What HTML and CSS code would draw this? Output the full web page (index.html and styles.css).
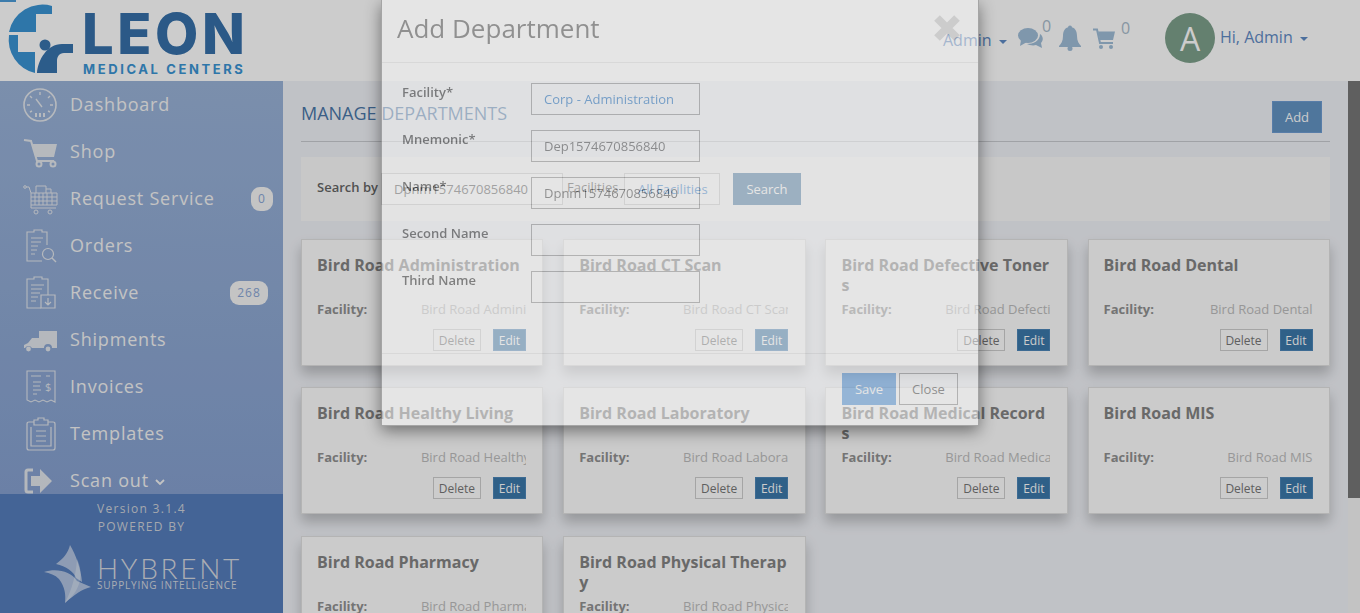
FILE: index.html
```html
<!DOCTYPE html>
<html lang="en">
<head>
  <meta charset="UTF-8" />
  <meta name="viewport" content="width=device-width, initial-scale=1.0"/>
  <title>Manage Departments</title>
  <link rel="stylesheet" href="styles.css">
</head>
<body>
  <div class="app">
    <header class="topbar">
      <span class="skip-mark"></span>
      <div class="logo">
        <svg class="logo-mark" viewBox="0 0 76 76" width="76" height="76">
          <path fill="#3a94d4" d="M52 6 V14 H36 V32 H9 A34 34 0 0 1 52 6 Z"/>
          <path fill="#3a94d4" d="M9 35 H18 V52 H35 V73 A34 34 0 0 1 9 35 Z"/>
          <circle cx="45" cy="45" r="5.5" fill="#3873ad"/>
          <path fill="#3873ad" d="M37 73 C38 60 47 44 62 44 H73 V53 H64 C59 53 57 57 57 61 V73 Z"/>
        </svg>
        <div class="logo-text">
          <span class="logo-name">LEON</span>
          <span class="logo-sub">MEDICAL CENTERS</span>
        </div>
      </div>
      <div class="top-actions">
        <span class="top-admin">Admin <i class="caret"></i></span>
        <svg class="top-icon comments" viewBox="0 0 26 22" width="26" height="22">
          <ellipse cx="10" cy="8.5" rx="10" ry="7.5" fill="#9fbdd8"/>
          <path d="M3 13 L2 19 L9 15 Z" fill="#9fbdd8"/>
          <path d="M22 7 C25 9 26 13 23 16 L24 21 L18 18 C15 19 11 18 9 17 C15 17 22 14 22 7 Z" fill="#9fbdd8"/>
        </svg>
        <sup class="count count-chat">0</sup>
        <svg class="top-icon bell" viewBox="0 0 24 26" width="24" height="26">
          <circle cx="12" cy="2.5" r="2" fill="#9fbdd8"/>
          <path d="M12 2 C17 2 19 6 19 11 C19 16 21 19 23 21 V22 H1 V21 C3 19 5 16 5 11 C5 6 7 2 12 2 Z" fill="#9fbdd8"/>
          <circle cx="12" cy="23.5" r="2.5" fill="#9fbdd8"/>
        </svg>
        <svg class="top-icon cart" viewBox="0 0 24 22" width="24" height="22">
          <path d="M1 1.5 H5 L8 15 H21" fill="none" stroke="#9fbdd8" stroke-width="2"/>
          <path d="M6 3.5 H23 L21 12 H8 Z" fill="#9fbdd8"/>
          <circle cx="9" cy="19" r="2" fill="#9fbdd8"/>
          <circle cx="19" cy="19" r="2" fill="#9fbdd8"/>
        </svg>
        <sup class="count count-cart">0</sup>
        <span class="avatar">A</span>
        <span class="top-user">Hi, Admin <i class="caret"></i></span>
      </div>
    </header>

    <div class="main">
      <aside class="sidebar">
        <nav class="menu">
          <a class="menu-item">
            <svg class="menu-icon" viewBox="0 0 36 36">
              <circle cx="18" cy="18" r="16" fill="none" stroke-width="1.6"/>
              <path d="M18 5 V8 M8 9 L10 11 M28 9 L26 11 M5 18 H8 M31 18 H28 M8 25 L10 24 M28 25 L26 24 M14 12 L20 20" fill="none" stroke-width="1.4"/>
              <path d="M13 26 H15 V30 H13 Z M17 26 H19 V30 H17 Z M21 26 H23 V30 H21 Z" class="fill"/>
            </svg>
            <span class="menu-label">Dashboard</span>
          </a>
          <a class="menu-item">
            <svg class="menu-icon" viewBox="0 0 36 36">
              <path d="M2 6 L9 7 L15 27 H32" fill="none" stroke-width="2"/>
              <path d="M10 10 H35 L32 23 H14 Z" class="fill"/>
              <circle cx="17" cy="30" r="2.5" fill="none" stroke-width="2"/>
              <circle cx="31" cy="30" r="2.5" fill="none" stroke-width="2"/>
            </svg>
            <span class="menu-label">Shop</span>
          </a>
          <a class="menu-item">
            <svg class="menu-icon" viewBox="0 0 36 36">
              <circle cx="3" cy="6" r="1.3" fill="none" stroke-width="1"/>
              <path d="M4 6 H7 L9 12 V27 H34 M9 12 H35 V24 H9 M9 16 H35 M9 20 H35 M13 12 V24 M17 12 V24 M21 12 V24 M25 12 V24 M30 12 V24 M14 12 V5 H24 V12 M24 8 H29 V12" fill="none" stroke-width="1"/>
              <circle cx="14" cy="31" r="2" fill="none" stroke-width="1"/>
              <circle cx="28" cy="31" r="2" fill="none" stroke-width="1"/>
            </svg>
            <span class="menu-label">Request Service</span>
          </a>
          <a class="menu-item">
            <svg class="menu-icon" viewBox="0 0 36 36">
              <path d="M25 17 V4 H20 V2 H12 V4 H5 V33 H20 M9 10 H21 M9 14 H19 M9 18 H16 M9 22 H15 M9 26 H13" fill="none" stroke-width="1.1"/>
              <circle cx="26" cy="26" r="5.5" fill="none" stroke-width="1.2"/>
              <path d="M30 30 L34 34" fill="none" stroke-width="1.4"/>
            </svg>
            <span class="menu-label">Orders</span>
          </a>
          <a class="menu-item">
            <svg class="menu-icon" viewBox="0 0 36 36">
              <path d="M26 20 V4 H20 V2 H12 V4 H5 V33 H19 M9 10 H22 M9 14 H20 M9 18 H18 M9 22 H16 M9 26 H14" fill="none" stroke-width="1.1"/>
              <path d="M19 20 H33 V33 H19 Z M26 23 V30 M23 27 L26 30 L29 27" fill="none" stroke-width="1.2"/>
            </svg>
            <span class="menu-label">Receive</span>
          </a>
          <a class="menu-item">
            <svg class="menu-icon" viewBox="0 0 36 36">
              <path d="M17 9 H35 V26 H30 A4 4 0 0 0 22 26 H10 A4 4 0 0 0 3 26 H2 V23 L6 21 L10 16 H17 Z" class="fill"/>
              <circle cx="6.5" cy="27" r="2.4" class="fill"/>
              <circle cx="26" cy="27" r="2.4" class="fill"/>
            </svg>
            <span class="menu-label">Shipments</span>
          </a>
          <a class="menu-item">
            <svg class="menu-icon" viewBox="0 0 36 36">
              <path d="M5 2 H33 V33 L29 31 L25 33 L21 31 L17 33 L13 31 L9 33 L5 31 Z" fill="none" stroke-width="1.1"/>
              <path d="M9 7 H19 M24 7 H28 M11 13 H19 M11 17 H18 M11 21 H19 M11 25 H15" fill="none" stroke-width="1.1"/>
              <text x="23" y="22" class="invoice-sign">$</text>
            </svg>
            <span class="menu-label">Invoices</span>
          </a>
          <a class="menu-item">
            <svg class="menu-icon" viewBox="0 0 36 36">
              <path d="M12 6 H7 Q5 6 5 8 V32 Q5 34 7 34 H31 Q33 34 33 32 V8 Q33 6 31 6 H26" fill="none" stroke-width="1.2"/>
              <path d="M12 9 V4 H16 V2 H22 V4 H26 V9 Z M9 11 V30 H29 V11 M14 15 H24 M14 20 H24 M14 25 H24" fill="none" stroke-width="1.2"/>
            </svg>
            <span class="menu-label">Templates</span>
          </a>
          <a class="menu-item">
            <svg class="menu-icon" viewBox="0 0 36 36">
              <path d="M11 7 H6 Q4 7 4 9 V27 Q4 29 6 29 H11" fill="none" stroke-width="3"/>
              <path d="M9 13 H18 V6 L30 18 L18 30 V23 H9 Z" class="fill"/>
            </svg>
            <span class="menu-label">Scan out <svg class="chevron" viewBox="0 0 10 6" width="10" height="6"><path d="M1 1 L5 5 L9 1" fill="none" stroke-width="1.8"/></svg></span>
          </a>
        </nav>
        <span class="badge badge-request">0</span>
        <span class="badge badge-receive">268</span>
        <div class="side-foot">
          <div class="version">Version 3.1.4</div>
          <div class="version">POWERED BY</div>
          <div class="brand">
            <svg class="brand-mark" viewBox="0 0 48 60" width="48" height="60">
              <path fill="#fff" fill-opacity=".55" d="M26 0 C32 10 37 24 38 37 L32 33 C30 27 22 21 12 19 C19 14 24 8 26 0 Z"/>
              <path fill="#fff" fill-opacity=".55" d="M0 27 C12 23 27 26 33 36 L47 42 C38 44 30 50 21 58 C22 50 21 42 15 34 C11 30 6 28 0 27 Z"/>
              <path fill="#fff" fill-opacity=".3" d="M33 14 C39 26 39 44 21 58 C28 44 32 30 33 14 Z"/>
            </svg>
            <div class="brand-text">
              <span class="brand-name">HYBRENT</span>
              <span class="brand-sub">SUPPLYING INTELLIGENCE</span>
            </div>
          </div>
        </div>
      </aside>

      <section class="content">
        <div class="page-head">
          <h1>MANAGE DEPARTMENTS</h1>
          <button class="btn-add">Add</button>
        </div>
        <div class="search-band">
          <label class="search-label">Search by</label>
          <input class="search-input" value="Dpnm1574670856840">
          <label class="search-fac">Facilities</label>
          <span class="search-select">All Facilities</span>
          <button class="btn-search">Search</button>
        </div>
        <div class="cards">
          <article class="card">
            <h3>Bird Road Administration</h3>
            <div class="fac"><b>Facility:</b><span>Bird Road Administration</span></div>
            <div class="card-btns"><button class="btn-del">Delete</button><button class="btn-edit">Edit</button></div>
          </article>
          <article class="card">
            <h3>Bird Road CT Scan</h3>
            <div class="fac"><b>Facility:</b><span>Bird Road CT Scan</span></div>
            <div class="card-btns"><button class="btn-del">Delete</button><button class="btn-edit">Edit</button></div>
          </article>
          <article class="card">
            <h3>Bird Road Defective Toners</h3>
            <div class="fac"><b>Facility:</b><span>Bird Road Defective Toners</span></div>
            <div class="card-btns"><button class="btn-del">Delete</button><button class="btn-edit">Edit</button></div>
          </article>
          <article class="card">
            <h3>Bird Road Dental</h3>
            <div class="fac"><b>Facility:</b><span>Bird Road Dental</span></div>
            <div class="card-btns"><button class="btn-del">Delete</button><button class="btn-edit">Edit</button></div>
          </article>
          <article class="card">
            <h3>Bird Road Healthy Living</h3>
            <div class="fac"><b>Facility:</b><span>Bird Road Healthy Living</span></div>
            <div class="card-btns"><button class="btn-del">Delete</button><button class="btn-edit">Edit</button></div>
          </article>
          <article class="card">
            <h3>Bird Road Laboratory</h3>
            <div class="fac"><b>Facility:</b><span>Bird Road Laboratory</span></div>
            <div class="card-btns"><button class="btn-del">Delete</button><button class="btn-edit">Edit</button></div>
          </article>
          <article class="card">
            <h3>Bird Road Medical Records</h3>
            <div class="fac"><b>Facility:</b><span>Bird Road Medical Records</span></div>
            <div class="card-btns"><button class="btn-del">Delete</button><button class="btn-edit">Edit</button></div>
          </article>
          <article class="card">
            <h3>Bird Road MIS</h3>
            <div class="fac"><b>Facility:</b><span>Bird Road MIS</span></div>
            <div class="card-btns"><button class="btn-del">Delete</button><button class="btn-edit">Edit</button></div>
          </article>
          <article class="card">
            <h3>Bird Road Pharmacy</h3>
            <div class="fac"><b>Facility:</b><span>Bird Road Pharmacy</span></div>
            <div class="card-btns"><button class="btn-del">Delete</button><button class="btn-edit">Edit</button></div>
          </article>
          <article class="card">
            <h3>Bird Road Physical Therapy</h3>
            <div class="fac"><b>Facility:</b><span>Bird Road Physical Therapy</span></div>
            <div class="card-btns"><button class="btn-del">Delete</button><button class="btn-edit">Edit</button></div>
          </article>
        </div>
      </section>

      <div class="scrollbar"><div class="scroll-thumb"></div></div>
    </div>
  </div>

  <div class="backdrop"></div>

  <div class="modal">
    <div class="modal-head">
      <h2>Add Department</h2>
      <svg class="modal-close" viewBox="0 0 28 28" width="28" height="28">
        <path d="M4 4 L24 24 M24 4 L4 24" fill="none" stroke="#000" stroke-opacity=".2" stroke-width="8"/>
      </svg>
    </div>
    <div class="modal-body">
      <div class="form-row"><label>Facility*</label><input class="field field-select" value="Corp - Administration"></div>
      <div class="form-row"><label>Mnemonic*</label><input class="field" value="Dep1574670856840"></div>
      <div class="form-row"><label>Name*</label><input class="field" value="Dpnm1574670856840"></div>
      <div class="form-row"><label>Second Name</label><input class="field"></div>
      <div class="form-row"><label>Third Name</label><input class="field"></div>
    </div>
    <div class="modal-foot">
      <button class="btn-save">Save</button>
      <button class="btn-close">Close</button>
    </div>
  </div>
</body>
</html>
```

FILE: styles.css
```css
* {
  box-sizing: border-box;
}
html, body {
  height: 100%;
}
body {
  margin: 0;
  overflow: hidden;
  font-family: "Open Sans", sans-serif;
  font-size: 13px;
  color: #333;
}
button, input {
  font-family: inherit;
}

.app {
  display: flex;
  flex-direction: column;
  height: 613px;
}

/* top bar */
.topbar {
  display: flex;
  align-items: center;
  height: 81px;
  flex: none;
  background-color: #fff;
  position: relative;
}
.skip-mark {
  position: absolute;
  left: 0;
  top: 0;
  width: 16px;
  height: 2px;
  background-color: #4b9cd8;
}
.logo {
  display: flex;
  width: 283px;
  height: 81px;
  position: relative;
}
.logo-mark {
  flex: none;
}
.logo-text {
  display: flex;
  flex-direction: column;
  margin: 7px 0 0 7px;
}
.logo-name {
  font-family: Inter, sans-serif;
  font-weight: 800;
  font-size: 56px;
  line-height: 55px;
  letter-spacing: 3.6px;
  margin-left: -1px;
  color: #3670a9;
}
.logo-sub {
  font-family: Inter, sans-serif;
  font-weight: 700;
  font-size: 13px;
  line-height: 14px;
  letter-spacing: 2.6px;
  color: #3a94d4;
  white-space: nowrap;
}
.top-actions {
  display: flex;
  align-items: center;
  flex: 1;
  height: 81px;
  padding-left: 660px;
  font-size: 16px;
  color: #5f8bc5;
  position: relative;
}
.top-admin {
  white-space: nowrap;
  margin-top: -1px;
  width: 75px;
}
.caret {
  display: inline-block;
  width: 0;
  height: 0;
  margin-left: 3px;
  vertical-align: middle;
  border-top: 4px solid currentColor;
  border-left: 4px solid transparent;
  border-right: 4px solid transparent;
}
.top-icon {
  flex: none;
}
.comments {
  margin-top: -6px;
}
.bell {
  margin: -6px 0 0 2px;
}
.cart {
  margin: -4px 0 0 10px;
}
.count {
  font-size: 16px;
  color: #a9bccc;
  line-height: 1;
  width: 14px;
}
.count-chat {
  margin: -30px 0 0 -2px;
}
.count-cart {
  margin: -25px 0 0 5px;
  width: 12px;
}
.avatar {
  display: flex;
  align-items: center;
  justify-content: center;
  flex: none;
  width: 50px;
  height: 50px;
  margin-left: 32px;
  margin-top: -5px;
  border-radius: 50%;
  background-color: #7da08b;
  color: #fff;
  font-size: 32px;
}
.top-user {
  margin-left: 5px;
  margin-top: -7px;
  white-space: nowrap;
}

.main {
  display: flex;
  flex: 1;
  min-height: 0;
}

/* sidebar */
.sidebar {
  display: flex;
  flex-direction: column;
  flex: none;
  width: 283px;
  position: relative;
}
.menu {
  flex: 1;
  min-height: 0;
  overflow: hidden;
  background: linear-gradient(#9ab3d8, #86a1d0);
}
.menu-item {
  display: flex;
  align-items: center;
  gap: 12px;
  height: 47px;
  padding-left: 22px;
}
.menu-icon {
  flex: none;
  width: 36px;
  height: 36px;
  stroke: #f2f2f2;
  opacity: .85;
}
.menu-icon .fill {
  fill: #f2f2f2;
  stroke: none;
}
.invoice-sign {
  font-size: 11px;
  fill: #f2f2f2;
  stroke: none;
}
.menu-label {
  margin-top: -2px;
  font-size: 18px;
  letter-spacing: .8px;
  color: #f4f4f4;
  white-space: nowrap;
}
.chevron {
  stroke: #f4f4f4;
  vertical-align: 2px;
  margin-left: 1px;
}
.badge {
  position: absolute;
  height: 24px;
  line-height: 24px;
  border-radius: 9px;
  background-color: #f5f5f5;
  color: #8aa6d6;
  font-size: 12px;
  letter-spacing: 1px;
  text-align: center;
}
.badge-request {
  left: 251px;
  top: 106px;
  width: 22px;
}
.badge-receive {
  left: 230px;
  top: 200px;
  width: 38px;
}
.side-foot {
  flex: none;
  height: 119px;
  background-color: #557dbc;
  padding-top: 6px;
  color: #cfd3da;
}
.version {
  width: 283px;
  text-align: center;
  font-size: 12px;
  line-height: 18px;
  letter-spacing: 1.3px;
}
.brand {
  display: flex;
  margin: 9px 0 0 44px;
}
.brand-mark {
  flex: none;
}
.brand-text {
  display: flex;
  flex-direction: column;
  margin: 9px 0 0 5px;
  color: #d5d9e0;
}
.brand-name {
  font-family: Lato, sans-serif;
  font-weight: 300;
  font-size: 28px;
  line-height: 28px;
  letter-spacing: 2.7px;
}
.brand-sub {
  margin-top: -3px;
  font-size: 10px;
  line-height: 12px;
  letter-spacing: .8px;
  white-space: nowrap;
}

/* page content */
.content {
  flex: 1;
  min-width: 0;
  overflow: hidden;
  background-color: #f1f3f8;
  padding: 0 18px;
}
.page-head {
  display: flex;
  justify-content: space-between;
  align-items: center;
  height: 61px;
  padding: 5px 8px 0 0;
  border-bottom: 1px solid #c9cbd0;
}
.page-head h1 {
  margin: -1px 0 0;
  font-size: 18px;
  font-weight: 400;
  color: #4a77a8;
}
.btn-add {
  width: 50px;
  height: 32px;
  margin-top: 6px;
  border: 1px solid #6f9dd2;
  background-color: #6394c4;
  color: #fff;
  font-size: 13px;
}
.search-band {
  display: flex;
  align-items: center;
  height: 64px;
  margin-top: 15px;
  padding-left: 16px;
  background-color: #fbfbfb;
}
.search-label {
  font-weight: 600;
  width: 64px;
  margin-top: -4px;
  white-space: nowrap;
  color: #666;
}
.search-input {
  width: 182px;
  height: 32px;
  padding: 0 12px;
  border: 1px solid #ccc;
  font-size: 13px;
  color: #555;
  background: #fff;
}
.search-fac {
  margin-left: 4px;
  width: 57px;
  margin-top: -4px;
  color: #555;
}
.search-select {
  width: 96px;
  height: 32px;
  line-height: 30px;
  padding-left: 13px;
  border: 1px solid #ccc;
  background: #fff;
  color: #3b86d1;
  overflow: hidden;
  white-space: nowrap;
}
.btn-search {
  width: 68px;
  height: 32px;
  margin-left: 13px;
  border: 0;
  background-color: #4a7ba4;
  color: #fff;
  font-size: 13px;
}

/* department cards */
.cards {
  display: grid;
  grid-template-columns: repeat(4, 1fr);
  column-gap: 19.8px;
  row-gap: 21.4px;
  margin-top: 18px;
}
.card {
  height: 127px;
  padding: 15px 16.5px 15px 15px;
  border: 1px solid #e2e2e2;
  background-color: #fefefe;
  box-shadow: 0 8px 12px rgba(0, 0, 0, .22);
}
.card h3 {
  height: 40px;
  margin: 0;
  font-size: 16px;
  line-height: 20px;
  font-weight: 700;
  color: #848484;
  word-break: break-all;
}
.fac {
  display: flex;
  justify-content: space-between;
  height: 18px;
  margin-top: 5px;
  line-height: 18px;
}
.fac b {
  font-weight: 700;
  color: #919191;
}
.fac span {
  width: 105px;
  flex: none;
  overflow: hidden;
  white-space: nowrap;
  text-align: right;
  color: #bdbdbd;
}
.card-btns {
  display: flex;
  justify-content: flex-end;
  gap: 12px;
  margin-top: 11px;
}
.card-btns button {
  height: 22px;
  padding: 0;
  font-size: 12px;
}
.btn-del {
  width: 48px;
  border: 1px solid #cfcfcf;
  background: #fff;
  color: #777;
}
.btn-edit {
  width: 33px;
  border: 1px solid #4d86b8;
  background-color: #3b78aa;
  color: #fff;
}

.scrollbar {
  flex: none;
  width: 12px;
  background-color: #f4f4f4;
}
.scroll-thumb {
  height: 417px;
  background-color: #777;
}

/* modal, caught mid fade-in */
.backdrop {
  position: fixed;
  inset: 0;
  background-color: rgba(0, 0, 0, .2);
}
.modal {
  position: fixed;
  left: 381px;
  top: 0;
  display: flex;
  flex-direction: column;
  width: 598px;
  height: 426px;
  border: 1px solid rgba(0, 0, 0, .5);
  border-top: 0;
  background-color: #fff;
  box-shadow: 0 5px 15px rgba(0, 0, 0, .9);
  opacity: .5;
}
.modal-head {
  display: flex;
  justify-content: space-between;
  align-items: center;
  flex: none;
  height: 63px;
  padding: 0 17px 6px 15px;
  border-bottom: 1px solid #e5e5e5;
}
.modal-head h2 {
  margin: 0;
  font-size: 26px;
  font-weight: 400;
  color: #555;
}
.modal-close {
  margin-top: -1px;
}
.modal-body {
  flex: 1;
  padding: 20px 20px 0;
}
.form-row {
  display: grid;
  grid-template-columns: 129px 169px;
  height: 32px;
  margin-bottom: 15px;
}
.form-row label {
  font-weight: 600;
  line-height: 18px;
  color: #333;
}
.field {
  width: 169px;
  height: 32px;
  padding: 0 12px;
  border: 1px solid #999;
  font-size: 13px;
  color: #555;
  background: transparent;
}
.field-select {
  color: #2a7ac8;
}
.modal-foot {
  display: flex;
  justify-content: flex-end;
  gap: 3px;
  flex: none;
  height: 72px;
  padding: 19px 20px 0 0;
  border-top: 1px solid #e5e5e5;
}
.modal-foot button {
  height: 32px;
  padding: 0;
  font-size: 13px;
}
.btn-save {
  width: 54px;
  border: 0;
  background-color: #5f9fe0;
  color: #fff;
}
.btn-close {
  width: 59px;
  border: 1px solid #999;
  background: #fff;
  color: #555;
}
```
